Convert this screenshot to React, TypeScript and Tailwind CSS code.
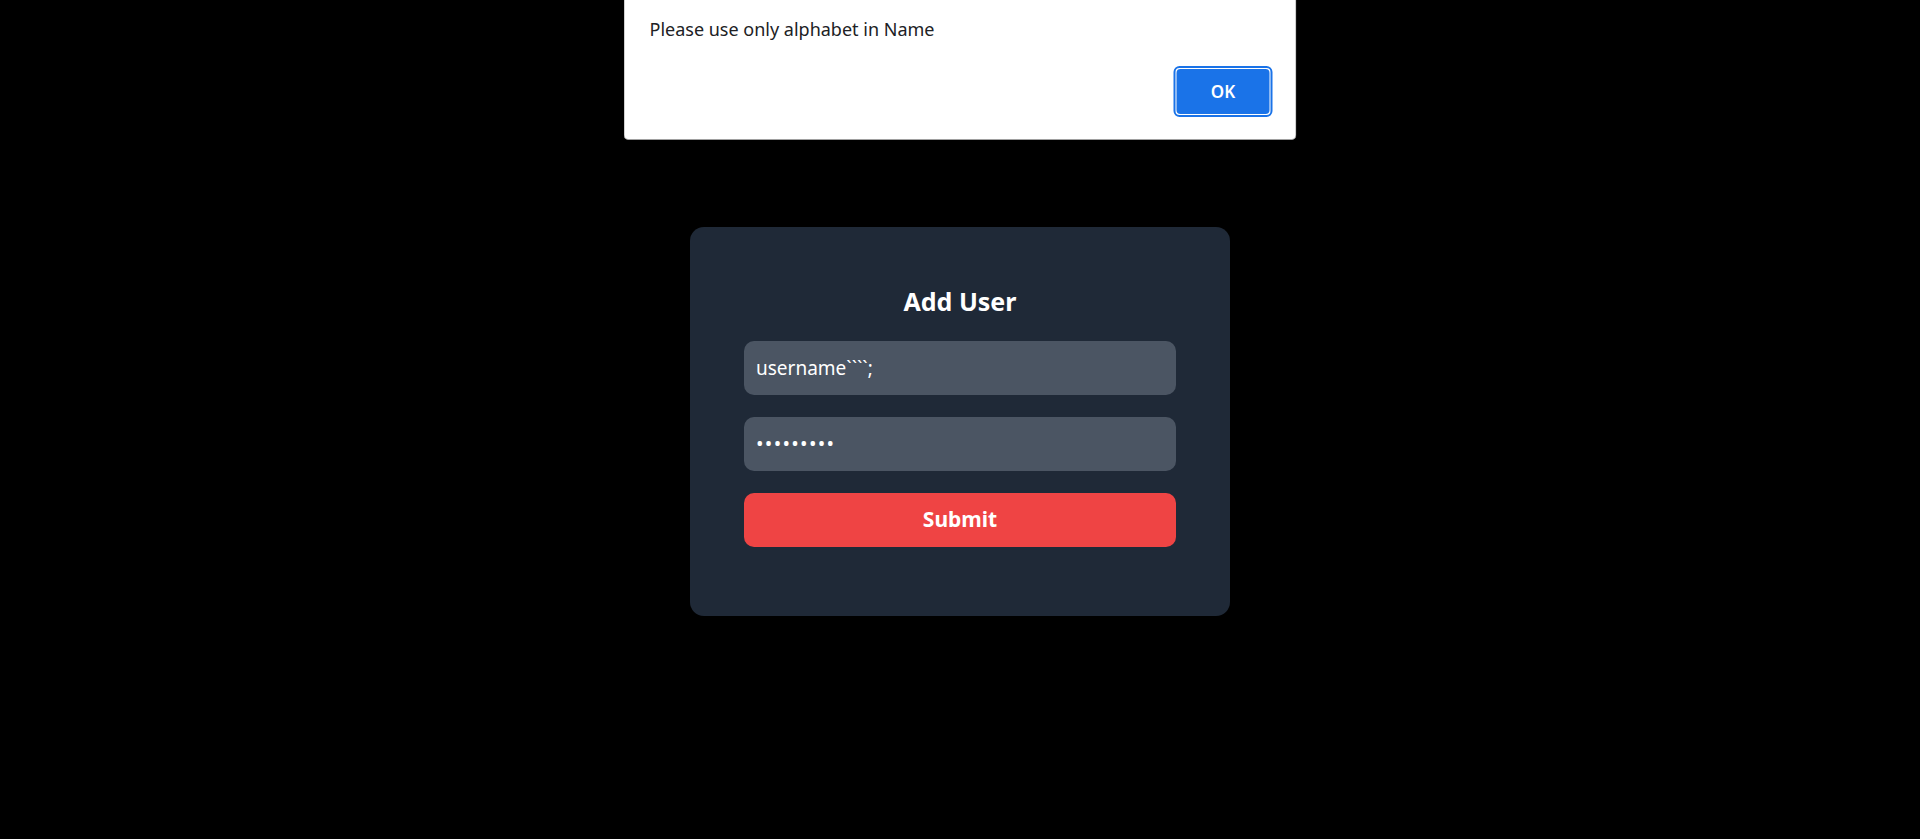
import React from 'react';

function AlertDialog() {
	return (
		<div className="absolute top-0 left-1/2 -translate-x-1/2 w-[673px] h-[140px] bg-white border border-t-0 border-[#a0a0a0] rounded-b-[5px] shadow-[0_2px_6px_rgba(0,0,0,0.35)]">
			<p className="pl-[25px] pt-[15px] text-[18px] leading-[28px] text-[#202124]">Please use only alphabet in Name</p>
			<div className="absolute right-[23px] top-[66px]">
				<button className="w-[99px] h-[51px] rounded-[6px] border-2 border-[#1a73e8] p-px bg-white">
					<span className="flex h-full w-full items-center justify-center rounded-[4px] bg-[#1a73e8] text-[17px] font-semibold text-white">
						OK
					</span>
				</button>
			</div>
		</div>
	);
}

export default function App() {
	return (
		<div className="relative min-h-screen bg-black flex items-center justify-center font-['Noto_Sans',sans-serif]">
			<AlertDialog />

			{/* Form Card */}
			<div className="mt-[3px] w-[540px] bg-[#1f2937] rounded-[14px] px-[54px] pt-[56px] pb-[69px]">
				<h2 className="text-center text-[25px] leading-[36px] font-bold text-white mb-[22px]">Add User</h2>
				<div className="flex flex-col gap-[22px]">
					<input
						type="text"
						defaultValue="username````;"
						className="h-[54px] w-full rounded-[10px] bg-[#4b5563] px-3 text-[19px] text-white outline-none"
					/>
					<input
						type="password"
						defaultValue="123456789"
						className="h-[54px] w-full rounded-[10px] bg-[#4b5563] px-3 text-[20px] tracking-[1.3px] text-white outline-none"
					/>
					<button className="h-[54px] w-full rounded-[10px] bg-[#ef4444] text-[21px] font-bold text-white">
						Submit
					</button>
				</div>
			</div>
		</div>
	);
}
